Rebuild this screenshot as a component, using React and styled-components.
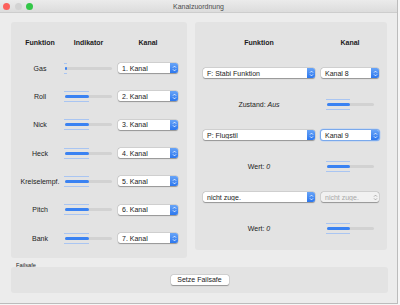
import { Fragment } from "react"
import styled, { createGlobalStyle } from "styled-components"

const GlobalStyle = createGlobalStyle`
  html, body { margin: 0; padding: 0; background: #f6f6f6; }
  body { font-family: "Liberation Sans", Arial, sans-serif; }
`

const Window = styled.div`
  width: 398px;
  height: 304px;
  box-sizing: border-box;
  background: #ececec;
  border-right: 1px solid #bcbcbc;
  border-bottom: 1px solid #bcbcbc;
  display: flex;
  flex-direction: column;
`

const TitleBar = styled.div`
  height: 12px;
  display: grid;
  grid-template-columns: 1fr auto 1fr;
  align-items: center;
  background: linear-gradient(#ebebeb, #dcdcdc);
  border-bottom: 1px solid #cdcdcd;
`

const Lights = styled.div`
  display: flex;
  gap: 4.5px;
  padding-left: 3px;
`

const Light = styled.span`
  width: 7px;
  height: 7px;
  border-radius: 50%;
  background: ${(p) => p.$color};
`

const Title = styled.div`
  font-size: 7px;
  color: #4c4c4c;
`

const Content = styled.div`
  padding: 9px 10px 0 11px;
  display: flex;
  flex-direction: column;
`

const MainRow = styled.div`
  display: flex;
  gap: 8px;
  align-items: flex-start;
`

const Panel = styled.div`
  background: #e3e3e3;
  border-radius: 3px;
  box-sizing: border-box;
  width: ${(p) => p.$w}px;
  height: ${(p) => p.$h}px;
`

const LeftGrid = styled.div`
  display: grid;
  grid-template-columns: 50px 53px 60px;
  grid-template-rows: 24px repeat(7, 28.33px);
  align-items: center;
  padding: 8px 0 0 4px;
`

const RightGrid = styled.div`
  display: grid;
  grid-template-columns: 112px 58px;
  column-gap: 6px;
  grid-template-rows: repeat(7, 31px);
  align-items: center;
  justify-items: center;
  padding: 4.5px 0 0 8px;
`

const Head = styled.div`
  font-size: 7px;
  font-weight: bold;
  color: #1c1c1c;
  text-align: center;
  padding-right: ${(p) => p.$pr || 0}px;
`

const Label = styled.div`
  font-size: 7px;
  color: #222;
  text-align: center;
  white-space: nowrap;
  em { font-style: italic; }
`

const SliderWrap = styled.div`
  position: relative;
  width: 47px;
  height: 11px;
  display: flex;
  align-items: center;
`

const Track = styled.div`
  width: 100%;
  height: 3px;
  border-radius: 1.5px;
  background: #d2d2d2;
`

const Fill = styled.div`
  height: 3px;
  border-radius: 1.5px;
  background: #3a82f2;
  width: ${(p) => p.$value}%;
`

// thin highlight lines above and below the filled part
const Guide = styled.div`
  position: absolute;
  left: -1px;
  height: 1px;
  background: #a9c5f2;
  width: calc(${(p) => p.$value}% + 1px);
  ${(p) => (p.$top ? "top: 0;" : "bottom: 0;")}
`

const Slider = ({ value }) => (
  <SliderWrap>
    <Guide $value={value} $top />
    <Track>
      <Fill $value={value} />
    </Track>
    <Guide $value={value} />
  </SliderWrap>
)

const SelectBox = styled.div`
  width: ${(p) => p.$w}px;
  height: 10px;
  box-sizing: border-box;
  display: flex;
  align-items: center;
  border-radius: 2.5px;
  background: ${(p) => (p.$disabled ? "#f1f1f1" : "#fff")};
  box-shadow: ${(p) =>
    p.$focus
      ? "0 0 0 1px #7aa9ec, 0 0 0 1.5px #b8d0f4"
      : "0 0 0 0.5px rgba(0,0,0,0.12), 0 0.5px 1px rgba(0,0,0,0.3)"};
`

const SelectText = styled.span`
  flex: 1;
  font-size: 7px;
  padding-left: 4px;
  color: ${(p) => (p.$disabled ? "#a8a8a8" : "#1a1a1a")};
  white-space: nowrap;
  overflow: hidden;
`

const Arrow = styled.span`
  width: 8px;
  height: 10px;
  display: flex;
  align-items: center;
  justify-content: center;
  border-radius: 0 2.5px 2.5px 0;
  background: ${(p) =>
    p.$disabled ? "transparent" : "linear-gradient(#68a4f7, #2c77ee)"};
`

const Select = ({ text, w, disabled, focus }) => (
  <SelectBox $w={w} $disabled={disabled} $focus={focus}>
    <SelectText $disabled={disabled}>{text}</SelectText>
    <Arrow $disabled={disabled}>
      <svg width="5" height="7" viewBox="0 0 5 7">
        <path
          d="M1 2.6 L2.5 1.1 L4 2.6 M1 4.4 L2.5 5.9 L4 4.4"
          fill="none"
          stroke={disabled ? "#9a9a9a" : "#fff"}
          strokeWidth="0.8"
        />
      </svg>
    </Arrow>
  </SelectBox>
)

const FailsafeLabel = styled.div`
  font-size: 5.7px;
  color: #222;
  padding: 4px 0 0 5px;
  line-height: 6px;
  margin-bottom: -1px;
`

const FailsafeBox = styled.div`
  width: 377px;
  height: 26px;
  background: #e3e3e3;
  border-radius: 3px;
  display: flex;
  align-items: center;
  justify-content: center;
`

const Button = styled.button`
  width: 58px;
  height: 10px;
  padding: 0;
  border: none;
  border-radius: 2px;
  background: #fff;
  font-family: "Liberation Sans", Arial, sans-serif;
  font-size: 7px;
  color: #1a1a1a;
  line-height: 10px;
  box-shadow: 0 0 0 0.5px rgba(0,0,0,0.12), 0 0.5px 1px rgba(0,0,0,0.3);
`

const channels = [
  { name: "Gas", value: 4 },
  { name: "Roll", value: 51 },
  { name: "Nick", value: 51 },
  { name: "Heck", value: 51 },
  { name: "Kreiselempf.", value: 51 },
  { name: "Pitch", value: 51 },
  { name: "Bank", value: 51 },
]

const App = () => {
  return (
    <Window>
      <GlobalStyle />
      <TitleBar>
        <Lights>
          <Light $color="#fc605b" />
          <Light $color="#d3d3d3" />
          <Light $color="#33c748" />
        </Lights>
        <Title>Kanalzuordnung</Title>
        <div />
      </TitleBar>
      <Content>
        <MainRow>
          <Panel $w={176} $h={236}>
            <LeftGrid>
              <Head>Funktion</Head>
              <Head $pr={6}>Indikator</Head>
              <Head>Kanal</Head>
              {channels.map((c, i) => (
                <Fragment key={c.name}>
                  <Label>{c.name}</Label>
                  <Slider value={c.value} />
                  <Select text={`${i + 1}. Kanal`} w={60} />
                </Fragment>
              ))}
            </LeftGrid>
          </Panel>
          <Panel $w={192} $h={228}>
            <RightGrid>
              <Head>Funktion</Head>
              <Head>Kanal</Head>
              <Select text="F: Stabi Funktion" w={112} />
              <Select text="Kanal 8" w={58} />
              <Label>Zustand: <em>Aus</em></Label>
              <Slider value={51} />
              <Select text="P: Flugstil" w={112} />
              <Select text="Kanal 9" w={58} focus />
              <Label>Wert: <em>0</em></Label>
              <Slider value={51} />
              <Select text="nicht zuge." w={112} />
              <Select text="nicht zuge." w={58} disabled />
              <Label>Wert: <em>0</em></Label>
              <Slider value={51} />
            </RightGrid>
          </Panel>
        </MainRow>
        <FailsafeLabel>Failsafe</FailsafeLabel>
        <FailsafeBox>
          <Button>Setze Failsafe</Button>
        </FailsafeBox>
      </Content>
    </Window>
  )
}

export default App
